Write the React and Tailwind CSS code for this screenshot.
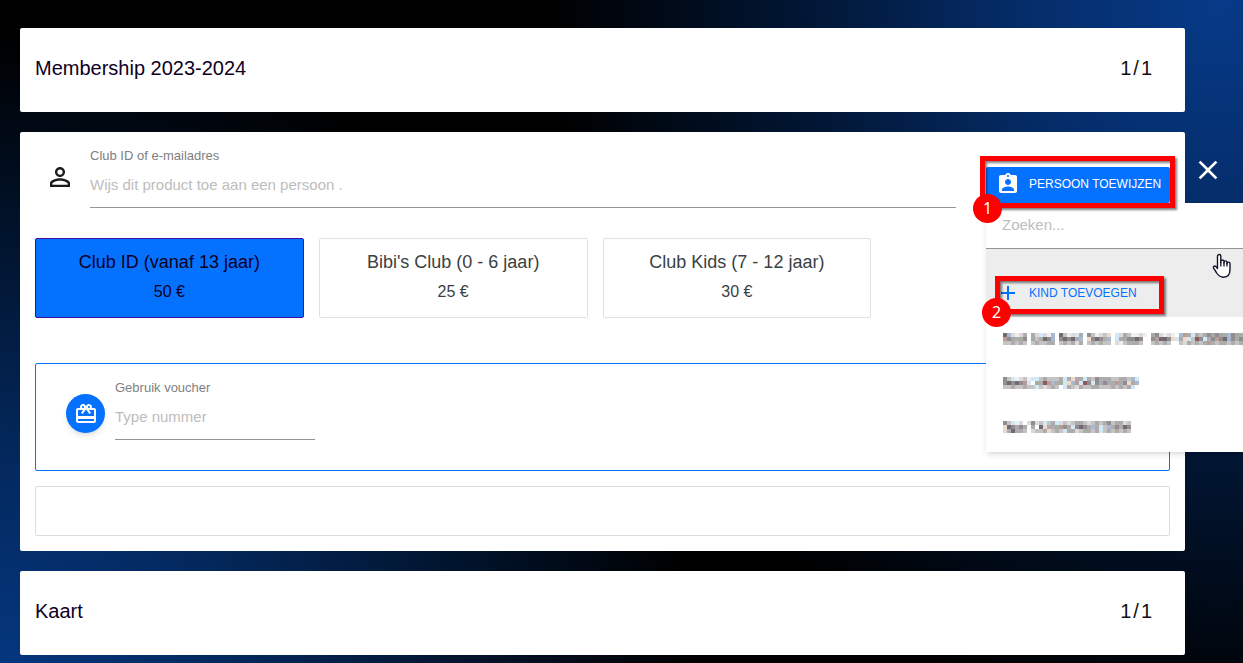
import React from 'react';
import { MdAdd, MdAssignmentInd, MdClose, MdPersonOutline, MdRedeem } from 'react-icons/md';

const options = [
  { id: 'club', name: 'Club ID (vanaf 13 jaar)', price: '50 €' },
  { id: 'bibi', name: "Bibi's Club (0 - 6 jaar)", price: '25 €' },
  { id: 'kids', name: 'Club Kids (7 - 12 jaar)', price: '30 €' },
];

// Pixelated names: one character per 4px cell
const cellColors = {
  1: '#f0eeee',
  2: '#dcdadb',
  3: '#c6c3c4',
  4: '#aeabac',
  5: '#918c8f',
  6: '#6f6b70',
  p: '#efd9c8',
  r: '#b89c98',
  d: '#8a5a5c',
  b: '#d3e8f5',
  s: '#a9b9d3',
  g: '#a3ada2',
};

const maskedPeople = [
  [
    '6s2124.g2b21s.6312b4.53123p.b2g31121.g52121.sr4b4345g5g4s5g4',
    'r5g4g5.g3465s.56564s.p5654s.b4g5565..5r665pb4pb3d5b45r56s5g5',
    '334343.343344.343424.343433.2134443..34343..3243434r43443434',
  ],
  [
    '53b1231bb3g3334b4p44b43544433443sb',
    '56565rb.g4drs4gbpsrbd5b54544r45p4s',
    '33433433b32343.b4324334433343434b',
  ],
  [
    '53b12.2523b34b232344323g34534423',
    'p65454.4.6p44gr54b5654s4b3s45465s',
    '246443.2334p343b44234434b34343434',
  ],
];

function MaskedName({ rows }) {
  const width = rows[0].length * 4;
  return (
    <svg
      width={width}
      height={12}
      viewBox={`0 0 ${width} 12`}
      shapeRendering="crispEdges"
      className="shrink-0"
      aria-hidden="true"
    >
      {rows.map((row, y) =>
        row.split('').map((cell, x) =>
          cell === '.' ? null : (
            <rect key={`${x}-${y}`} x={x * 4} y={y * 4} width={4} height={4} fill={cellColors[cell]} />
          )
        )
      )}
    </svg>
  );
}

function HandCursor() {
  return (
    <svg
      width={20}
      height={26}
      viewBox="0 0 20 26"
      className="pointer-events-none absolute top-[50px] left-[226px]"
      aria-hidden="true"
    >
      <path
        d="M5.5 15.5V3.2C5.5 0.9 8.8 0.9 8.8 3.2V9.5V8.2C9 6.5 12 6.7 12 8.5V10V9C12.3 7.4 15 7.6 15 9.4V10.8V10C15.4 8.6 18 8.9 18 10.8V16.5C18 21.5 15.5 24.2 11.5 24.2C7.5 24.2 6.2 22.5 4.4 19.5L1.6 15.2C0.8 13.6 2.6 12.4 3.9 13.6Z"
        fill="#fff"
        stroke="#14142b"
        strokeWidth="1.4"
        strokeLinejoin="round"
      />
      <path d="M8.8 8.5V13.5M12 9V13.5M15 10V13.5" fill="none" stroke="#14142b" strokeWidth="1.3" />
    </svg>
  );
}

function Step({ number, className }) {
  return (
    <span
      className={`pointer-events-none absolute z-20 flex size-[29px] items-center justify-center rounded-full bg-[#ff0000] pb-px font-['Noto_Sans'] text-base leading-none text-white ${className}`}
    >
      {number}
    </span>
  );
}

function Highlight({ className }) {
  return (
    <span
      className={`pointer-events-none absolute z-10 border-[5px] border-[#ff0000] drop-shadow-[2px_2px_1px_rgba(0,0,0,0.5)] ${className}`}
    />
  );
}

function Row({ children, side }) {
  return (
    <div className="flex">
      <section className="min-w-0 flex-1 rounded-xs bg-white px-[15px]">{children}</section>
      <div className="w-[58px] shrink-0 pt-[22px] pl-[7px]">{side}</div>
    </div>
  );
}

function ProductHeader({ title }) {
  return (
    <Row>
      <div className="flex h-[84px] items-center justify-between pr-[18px] pb-1 text-xl text-[#0d0022]">
        <h2>{title}</h2>
        <p className="flex gap-[2px] text-[#111]">
          <span>1</span>
          <span>/</span>
          <span>1</span>
        </p>
      </div>
    </Row>
  );
}

function Field({ id, label, placeholder, className }) {
  return (
    <div className={className}>
      <label htmlFor={id} className="block text-[13px] leading-5 text-[#808080]">
        {label}
      </label>
      <input
        id={id}
        type="text"
        placeholder={placeholder}
        className="block h-[42px] w-full border-b border-[#949494] pb-1 text-[15px] outline-none placeholder:text-[#bdbdbd]"
      />
    </div>
  );
}

function PersonMenu() {
  return (
    <div className="absolute top-full left-0 w-[320px] bg-white pb-[3px] shadow-md">
      <input
        type="text"
        aria-label="Zoeken"
        placeholder="Zoeken..."
        className="block h-[46px] w-full border-b border-[#949494] px-4 pb-[2px] text-[15px] outline-none placeholder:text-[#bdbdbd]"
      />
      <div className="flex h-[68px] items-end bg-[#ededed] pb-[6px]">
        <div className="relative">
          <button type="button" className="flex h-9 items-center gap-[9px] pl-[10px] text-xs text-[#0571ff]">
            <MdAdd size={24} />
            KIND TOEVOEGEN
          </button>
          <Highlight className="top-px -right-[27px] -bottom-[3px] left-[9px]" />
          <Step number={2} className="-bottom-4 -left-1" />
        </div>
      </div>
      <ul>
        {maskedPeople.map((rows, i) => (
          <li key={i}>
            <button type="button" className="flex h-11 w-full items-center overflow-hidden pl-[17px]">
              <MaskedName rows={rows} />
            </button>
          </li>
        ))}
      </ul>
      <HandCursor />
    </div>
  );
}

export default function App() {
  return (
    <div className="min-h-screen overflow-hidden bg-black bg-[radial-gradient(ellipse_54%_110%_at_98%_0%,#063a88_0%,#052c68_30%,#011634_62%,transparent_100%),radial-gradient(ellipse_56%_95%_at_0%_100%,#05367e_0%,#03275a_35%,#011530_65%,transparent_100%)] font-['Liberation_Sans',Arial,sans-serif]">
      <main className="flex flex-col gap-5 pt-7 pb-2 pl-5">
        <ProductHeader title="Membership 2023-2024" />

        <div className="relative z-10">
          <Row
            side={
              <button type="button" aria-label="Sluiten" className="block text-white">
                <MdClose size={32} />
              </button>
            }
          >
            {/* Assign person */}
            <div className="flex items-start pt-[14px]">
              <MdPersonOutline size={30} className="mt-4 ml-[10px] shrink-0 text-[#1c1c1c]" />
              <Field
                id="person"
                label="Club ID of e-mailadres"
                placeholder="Wijs dit product toe aan een persoon ."
                className="mr-[30px] ml-[15px] flex-1"
              />
              <div className="relative mt-[21px]">
                <button
                  type="button"
                  className="flex h-9 w-[184px] items-center gap-[9px] rounded-xs bg-[#0571ff] pb-[2px] pl-[10px] text-xs whitespace-nowrap text-white"
                >
                  <MdAssignmentInd size={24} />
                  PERSOON TOEWIJZEN
                </button>
                <PersonMenu />
                <Highlight className="-top-[11px] -right-[5px] -bottom-[5px] -left-[6px]" />
                <Step number={1} className="-bottom-5 -left-[13px]" />
              </div>
            </div>

            {/* Membership types */}
            <ul className="grid grid-cols-4 pt-[30px]">
              {options.map((option, i) => (
                <li key={option.id} className="pr-[15px]">
                  <button
                    type="button"
                    className={`block h-20 w-full rounded-xs border pb-1 text-center ${
                      i === 0
                        ? 'border-[#3a0ca3] bg-[#0571ff] text-[#0d0022]'
                        : 'border-[#dee2e6] text-[#3b3f42]'
                    }`}
                  >
                    <span className="block text-lg leading-7">{option.name}</span>
                    <span className="block pt-1 text-base leading-6">{option.price}</span>
                  </button>
                </li>
              ))}
            </ul>

            {/* Voucher */}
            <div className="mt-[45px] flex h-[108px] items-start rounded-xs border border-[#0571ff] pt-[14px] pl-[30px]">
              <button
                type="button"
                aria-label="Voucher"
                className="mt-4 mr-[10px] flex size-[39px] items-center justify-center rounded-full bg-[#0571ff] text-white shadow-md"
              >
                <MdRedeem size={24} />
              </button>
              <Field id="voucher" label="Gebruik voucher" placeholder="Type nummer" className="w-[200px]" />
            </div>

            <div className="mt-[15px] mb-[15px] h-[50px] rounded-xs border border-[#dcdcdc]" />
          </Row>
        </div>

        <ProductHeader title="Kaart" />
      </main>
    </div>
  );
}
